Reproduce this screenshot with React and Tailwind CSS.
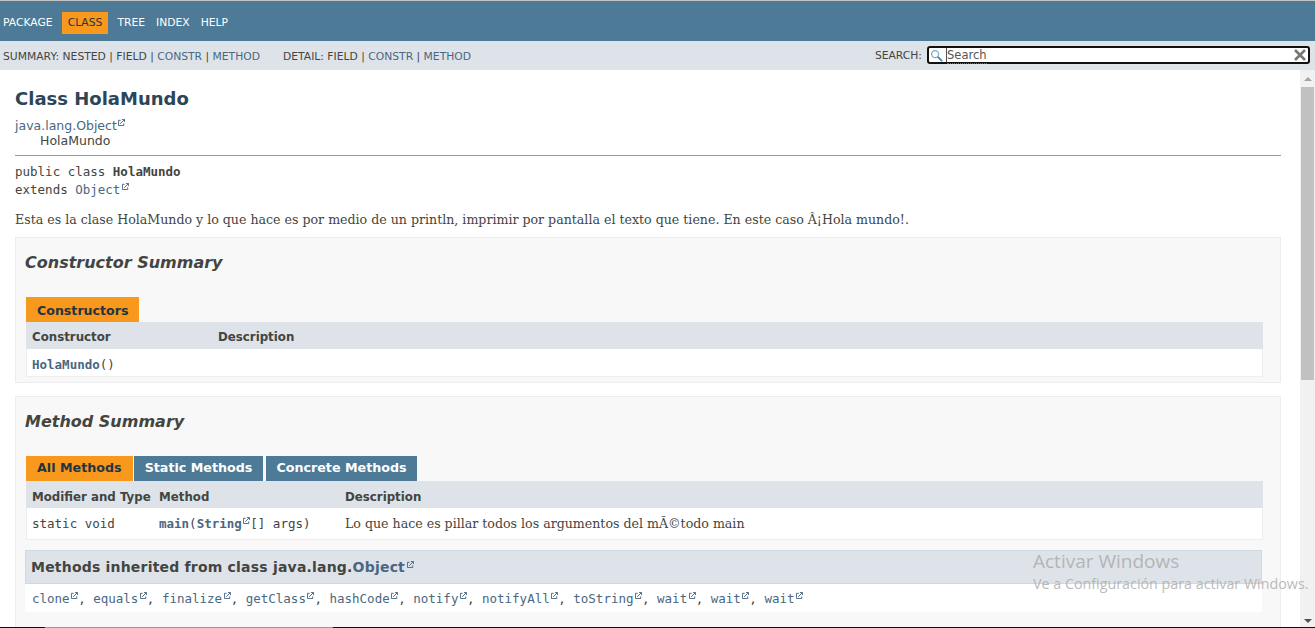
import React from 'react';

const sans = "font-['DejaVu_Sans',sans-serif]";
const mono = "font-['DejaVu_Sans_Mono',monospace]";
const serif = "font-['DejaVu_Serif',serif]";

// little "external link" mark javadoc puts after JDK links
const Ext = () => (
  <svg viewBox="0 0 8 8" className="inline-block w-[7px] h-[7px] align-[4px] ml-[1.5px]" fill="none" stroke="currentColor" strokeWidth="1.1">
    <path d="M3 1.5H.5v6h6V5" />
    <path d="M2.5 5.5 7 1M4.5.5h3v3" />
  </svg>
);

const A = ({ children, ext, bold }) => (
  <span className={`text-[#4A6782] ${bold ? 'font-bold' : ''}`}>
    {children}
    {ext && <Ext />}
  </span>
);

const inherited = ['clone', 'equals', 'finalize', 'getClass', 'hashCode', 'notify', 'notifyAll', 'toString', 'wait', 'wait', 'wait'];

const App = () => {
  return (
    <div className={`relative flex flex-col h-[628px] w-[1315px] overflow-hidden bg-white text-[#434541] ${sans}`}>
      {/* top nav */}
      <div className="h-px bg-[#c4c4c4]" />
      <nav className="flex items-center h-10 bg-[#4D7A97] text-white text-[10.75px] pl-[3px] pt-[4px]">
        <span>PACKAGE</span>
        <span className="ml-[9px] px-[6px] py-[5px] leading-[12px] bg-[#F8981D] text-[#253441]">CLASS</span>
        <span className="ml-[9px]">TREE</span>
        <span className="ml-[11px]">INDEX</span>
        <span className="ml-[11px]">HELP</span>
      </nav>
      <div className="flex items-center h-[29px] bg-[#dee3e9] text-[10.75px] pl-[3px]">
        <span className="mt-[4px]">SUMMARY: NESTED | FIELD | <A>CONSTR</A> | <A>METHOD</A></span>
        <span className="mt-[4px] ml-[23px]">DETAIL: FIELD | <A>CONSTR</A> | <A>METHOD</A></span>
        <span className="mt-[2px] ml-auto mr-[5px]">SEARCH:</span>
        <div className="flex items-center w-[383px] h-[18px] mb-px mr-[5px] bg-white border-2 border-[#101010] rounded-[3px]">
          <svg viewBox="0 0 14 14" className="w-[13px] h-[13px] ml-[1px] mr-[3px]" fill="none">
            <circle cx="5.5" cy="5.5" r="3.8" stroke="#7fa8c4" strokeWidth="1.3" />
            <path d="m8.5 8.5 4.5 4.5" stroke="#3f86b5" strokeWidth="2" />
          </svg>
          <span className="w-px h-[14px] bg-[#555]" />
          <span className="relative mt-[2px] text-[11.5px] leading-none text-[#555]">
            Search
            <span className="absolute left-0 right-0 bottom-[-2px] border-b border-dotted border-[#e53935]" />
          </span>
          <svg viewBox="0 0 12 12" className="w-3 h-3 ml-auto mr-[2px]" stroke="#777" strokeWidth="2.6">
            <path d="m1 1 10 10M11 1 1 11" />
          </svg>
        </div>
      </div>

      <div className="flex flex-1 min-h-0">
        <main className="flex-1 min-w-0 overflow-hidden pl-[15px] pr-[19px]">
          <h1 className="mt-[18px] text-[18px] leading-[22px] font-bold text-[#2c4557]">Class HolaMundo</h1>
          <div className="mt-[8px] text-[12.5px] leading-[15px]">
            <div><A ext>java.lang.Object</A></div>
            <div className="pl-[25px]">HolaMundo</div>
          </div>
          <hr className="mt-[7px] border-t border-[#999]" />
          <div className={`mt-[7px] text-[12.5px] leading-[18px] ${mono}`}>
            <div>public class <b>HolaMundo</b></div>
            <div>extends <A ext>Object</A></div>
          </div>
          <p className={`mt-[13px] text-[12.6px] leading-[15px] ${serif}`}>
            Esta es la clase HolaMundo y lo que hace es por medio de un println, imprimir por pantalla el texto que tiene. En este caso Â¡Hola mundo!.
          </p>

          {/* constructors */}
          <section className="mt-[10px] h-[146px] bg-[#f8f8f8] border border-[#ededed] pl-[9px] pr-[17px]">
            <h2 className="mt-[15px] text-[16px] leading-[20px] font-bold italic">Constructor Summary</h2>
            <div className="mt-[24px] ml-px flex">
              <span className="h-[25px] px-[11px] bg-[#F8981D] text-[#253441] text-[12.6px] font-bold leading-[27px]">Constructors</span>
            </div>
            <div className="ml-px flex items-center h-[27px] bg-[#dee3e9] text-[11.8px] font-bold pl-[6px] pt-[4px]">
              <span className="w-[186px]">Constructor</span>
              <span>Description</span>
            </div>
            <div className={`ml-px flex items-center h-[28px] bg-white border border-t-0 border-[#eeeeee] pl-[5px] pt-[6px] text-[12.5px] ${mono}`}>
              <A bold>HolaMundo</A>()
            </div>
          </section>

          {/* methods */}
          <section className="mt-[13px] h-[260px] bg-[#f8f8f8] border border-[#ededed] pl-[9px] pr-[17px]">
            <h2 className="mt-[15px] text-[16px] leading-[20px] font-bold italic">Method Summary</h2>
            <div className="mt-[24px] ml-px flex text-[12.7px] font-bold leading-[23px] h-[25px]">
              <span className="px-[11px] bg-[#F8981D] text-[#253441]">All Methods</span>
              <span className="ml-[1px] px-[11px] bg-[#4D7A97] text-white">Static Methods</span>
              <span className="ml-[3px] px-[10px] bg-[#4D7A97] text-white">Concrete Methods</span>
            </div>
            <div className="ml-px flex items-center h-[27px] bg-[#dee3e9] text-[11.8px] font-bold pl-[6px] pt-[6px]">
              <span className="w-[127px]">Modifier and Type</span>
              <span className="w-[186px]">Method</span>
              <span>Description</span>
            </div>
            <div className="ml-px flex items-center h-[32px] bg-white border border-t-0 border-[#eeeeee] pl-[5px] pt-[2px] text-[12.5px]">
              <span className={`w-[127px] ${mono}`}>static void</span>
              <span className={`w-[186px] ${mono}`}><A bold>main</A>(<A bold ext>String</A>[] args)</span>
              <span className={`text-[12.6px] ${serif}`}>Lo que hace es pillar todos los argumentos del mÃ©todo main</span>
            </div>
            <div className="mt-[10px] flex items-center h-[34px] bg-[#dee3e9] border border-[#d0d9e0] pl-[5px] text-[14px] font-bold tracking-[0.2px] mr-px">
              <span>Methods inherited from class java.lang.<A ext><span className="font-bold">Object</span></A></span>
            </div>
            <div className={`flex items-center h-[28px] bg-white pl-[7px] pt-[2px] text-[12.5px] ${mono} mr-px`}>
              {inherited.map((m, i) => (
                <span key={i} className="whitespace-pre">
                  <A ext>{m}</A>{i < inherited.length - 1 ? ', ' : ''}
                </span>
              ))}
            </div>
          </section>
        </main>

        {/* scrollbar */}
        <div className="flex flex-col items-center w-[15px] bg-[#f1f1f1]">
          <svg viewBox="0 0 8 4" className="w-2 h-1 mt-[7px]"><path d="M0 4 4 0l4 4z" fill="#a3a3a3" /></svg>
          <div className="mt-[6px] w-[13px] h-[293px] bg-[#c1c1c1]" />
          <svg viewBox="0 0 8 4" className="w-2 h-1 mt-auto mb-[5px]"><path d="M0 0h8L4 4z" fill="#505050" /></svg>
        </div>
      </div>

      {/* activation watermark over the page */}
      <div className="absolute left-[1033px] top-[549px] text-[#a8a8a8]/80 font-['Open_Sans',sans-serif] whitespace-nowrap pointer-events-none">
        <div className="text-[19px] leading-[24px]">Activar Windows</div>
        <div className="text-[14.3px] leading-[22px]">Ve a Configuración para activar Windows.</div>
      </div>
      {/* bit of taskbar peeking at the bottom */}
      <div className="absolute left-0 right-0 bottom-0 flex h-px bg-[#111]">
        <span className="ml-[45px] w-[288px] bg-[#999]" />
      </div>
    </div>
  );
};

export default App;
